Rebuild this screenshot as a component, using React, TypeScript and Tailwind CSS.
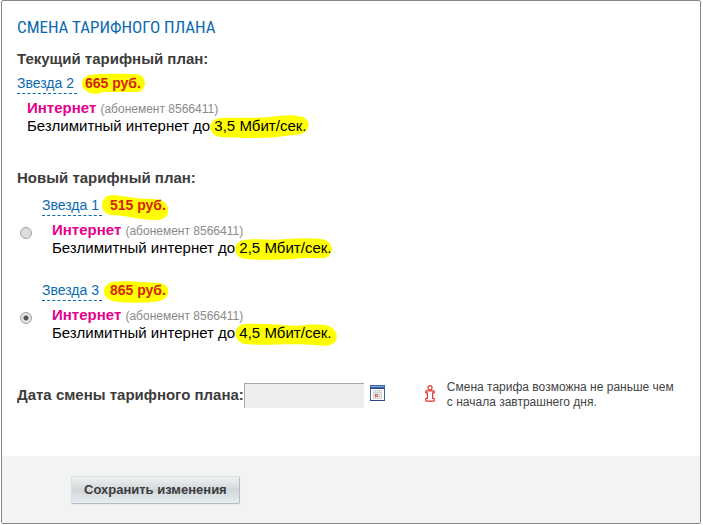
import { useState } from 'react';

type Mark = {
  width: number;
  height: number;
  path: string;
  className: string;
};

const marks: Record<string, Mark> = {
  current: {
    width: 64,
    height: 22,
    path: 'M9 2 C20 0 45 1 55 1 C62 2 64 6 64 11 C63 17 60 19 54 19 L22 19 C16 22 8 21 4 17 C-1 12 0 4 9 2Z',
    className: 'absolute -left-1 -top-0.5 -z-10',
  },
  currentSpeed: {
    width: 99,
    height: 24,
    path: 'M10 3 C25 2 50 4 67 1 C77 0 86 0 93 2 C99 5 100 11 97 15 C94 20 84 20 74 21 C58 24 25 23 10 22 C-3 20 -3 5 10 3Z',
    className: 'absolute -left-1 -top-0.5 -z-10',
  },
  first: {
    width: 66,
    height: 26,
    path: 'M9 0 C25 1 35 4 50 4 C61 4 66 8 66 15 C66 22 61 25 53 25 C38 25 22 20 9 20 C-3 18 -3 2 9 0Z',
    className: 'absolute -left-2 -top-0.5 -z-10',
  },
  firstSpeed: {
    width: 98,
    height: 22,
    path: 'M9 2 C20 0 38 3 52 1 C65 0 84 0 90 2 C99 5 99 17 90 20 C80 21 68 19 59 21 C44 22 22 22 10 21 C-3 19 -3 4 9 2Z',
    className: 'absolute -left-1 -top-px -z-10',
  },
  second: {
    width: 65,
    height: 22,
    path: 'M9 1 C20 -1 43 1 55 2 C63 3 65 8 64 12 C63 18 58 20 50 21 C36 22 17 22 9 20 C-3 17 -3 3 9 1Z',
    className: 'absolute -left-1.5 -top-px -z-10',
  },
  secondSpeed: {
    width: 102,
    height: 24,
    path: 'M10 1 C25 0 48 2 62 3 C73 1 86 1 94 3 C101 6 104 14 100 19 C96 24 87 23 79 22 C60 20 25 23 10 21 C-3 18 -3 3 10 1Z',
    className: 'absolute -left-1 -top-px -z-10',
  },
};

function Marked({ mark, children }: { mark: Mark; children: React.ReactNode }) {
  return (
    <span className="relative isolate whitespace-nowrap">
      <svg
        className={mark.className}
        width={mark.width}
        height={mark.height}
        viewBox={`0 0 ${mark.width} ${mark.height}`}
        aria-hidden="true"
      >
        <path d={mark.path} fill="#ffff00" />
      </svg>
      {children}
    </span>
  );
}

function PlanTitle({ name, price, mark }: { name: string; price: string; mark: Mark }) {
  return (
    <div className="flex gap-2 text-sm leading-[18px]">
      <a href="#plan" className="h-5 border-b border-dashed border-[#0b6ab0] pr-[3px] text-[#0b6ab0]">
        {name}
      </a>
      <strong className="text-[#d42410]">
        <Marked mark={mark}>{price}</Marked>
      </strong>
    </div>
  );
}

function PlanService({ speed, mark }: { speed: string; mark: Mark }) {
  return (
    <div>
      <p>
        <strong className="text-[#e6008c]">Интернет</strong>{' '}
        <span className="text-xs leading-none text-[#8a8a8a]">(абонемент 8566411)</span>
      </p>
      <p>
        Безлимитный интернет до <Marked mark={mark}>{speed}</Marked>
      </p>
    </div>
  );
}

function CalendarIcon() {
  return (
    <svg width="15" height="16" viewBox="0 0 15 16" shapeRendering="crispEdges" aria-hidden="true">
      <rect width="15" height="16" fill="#3e64a8" />
      <rect x="1" y="4" width="13" height="11" fill="#fff" />
      <rect y="3" width="15" height="1" fill="#27478c" />
      <rect x="1" y="1" width="13" height="1" fill="#86a6d6" />
      <rect y="15" width="15" height="1" fill="#27478c" />
      <rect x="3" y="5" width="9" height="9" fill="#d2d2d2" />
      <path
        d="M4 6h1v1h-1zM6 6h1v1h-1zM8 6h1v1h-1zM10 6h1v1h-1zM4 8h1v1h-1zM6 8h1v1h-1zM8 8h1v1h-1zM10 8h1v1h-1zM4 10h1v1h-1zM8 10h1v1h-1zM10 10h1v1h-1zM4 12h1v1h-1zM6 12h1v1h-1zM8 12h1v1h-1zM10 12h1v1h-1z"
        fill="#fff"
      />
      <rect x="5" y="9" width="3" height="3" fill="#cf6a48" />
      <rect x="6" y="10" width="1" height="1" fill="#fbd9c9" />
    </svg>
  );
}

function InfoIcon() {
  return (
    <svg width="10" height="17" viewBox="0 0 10 17" fill="#fff" stroke="#dc3530" strokeWidth="1.2" aria-hidden="true">
      <circle cx="5" cy="2.8" r="2.1" />
      <path d="M1.4 5.9h6.3v7.5h.8q.9 0 .9 1.4t-.9 1.4H1.5q-.9 0-.9-1.4t.9-1.4h.9V7.9h-1q-.8 0-.8-1t.8-1z" />
      <path d="M7.7 5.9h.9q.8 0 .8 1t-.8 1h-.9" />
    </svg>
  );
}

const plans = [
  { id: 'star1', name: 'Звезда 1', price: '515 руб.', speed: '2,5 Мбит/сек.', mark: marks.first, speedMark: marks.firstSpeed },
  { id: 'star3', name: 'Звезда 3', price: '865 руб.', speed: '4,5 Мбит/сек.', mark: marks.second, speedMark: marks.secondSpeed },
];

export default function App() {
  const [selected, setSelected] = useState('star3');
  const [date, setDate] = useState('');

  return (
    <div className="bg-white pb-px pl-px pr-0.5 font-['Liberation_Sans',Arial,sans-serif] text-[15px] leading-[18px] text-black">
      <form className="rounded-xs border border-[#858889]" onSubmit={(e) => e.preventDefault()}>
        <div className="px-[15px] pb-[46px] pt-4">
          <h1 className="mb-[13px] font-['Roboto_Condensed','Liberation_Sans_Narrow',sans-serif] text-[17px] leading-5 text-[#0b6ab0]">
            СМЕНА ТАРИФНОГО ПЛАНА
          </h1>

          <section>
            <h2 className="mb-1.5 font-bold text-[#3c3c3c]">Текущий тарифный план:</h2>
            <PlanTitle name="Звезда 2" price="665 руб." mark={marks.current} />
            <div className="mt-[5px] pl-2.5">
              <PlanService speed="3,5 Мбит/сек." mark={marks.currentSpeed} />
            </div>
          </section>

          <fieldset className="mt-[34px]">
            <legend className="mb-[9px] font-bold text-[#3c3c3c]">Новый тарифный план:</legend>
            <div className="flex flex-col gap-6">
              {plans.map((plan) => (
                <div key={plan.id} className="flex gap-2.5">
                  <input
                    type="radio"
                    name="plan"
                    id={plan.id}
                    value={plan.id}
                    checked={selected === plan.id}
                    onChange={() => setSelected(plan.id)}
                    aria-label={plan.name}
                    className="ml-[3px] mt-[31px] size-3 shrink-0 appearance-none rounded-full border border-[#a3a3a3] bg-[#dedede] checked:bg-[radial-gradient(circle,#555_0,#555_2px,#e4e4e4_3px)]"
                  />
                  <div>
                    <PlanTitle name={plan.name} price={plan.price} mark={plan.mark} />
                    <label htmlFor={plan.id} className="mt-[5px] block pl-2.5">
                      <PlanService speed={plan.speed} mark={plan.speedMark} />
                    </label>
                  </div>
                </div>
              ))}
            </div>
          </fieldset>

          <div className="mt-[38px] flex items-center">
            <label htmlFor="date" className="font-bold text-[#3c3c3c]">
              Дата смены тарифного плана:
            </label>
            <input
              id="date"
              type="text"
              value={date}
              onChange={(e) => setDate(e.target.value)}
              className="h-[25px] w-[120px] border-l border-t border-[#a9a9a9] bg-[#eeeeee] px-1"
            />
            <button type="button" aria-label="Выбрать дату" className="ml-1.5 pb-1">
              <CalendarIcon />
            </button>
            <div className="ml-10 flex items-center gap-3">
              <div className="shrink-0 pb-1">
                <InfoIcon />
              </div>
              <p className="text-xs leading-[15px] text-[#444]">
                Смена тарифа возможна не раньше чем
                <br />с начала завтрашнего дня.
              </p>
            </div>
          </div>
        </div>

        <div className="bg-[#f2f4f3] pb-[19px] pl-[69px] pt-5">
          <button
            type="submit"
            className="h-7 rounded-xs border border-[#dcdfe1] border-b-[#b9bcbe] border-r-[#b9bcbe] bg-linear-to-b from-[#eff0f1] via-[#d3d7da] to-[#e6eef2] px-3 text-[13px] font-bold text-[#3c3c3c] shadow-xs"
          >
            Сохранить изменения
          </button>
        </div>
      </form>
    </div>
  );
}
